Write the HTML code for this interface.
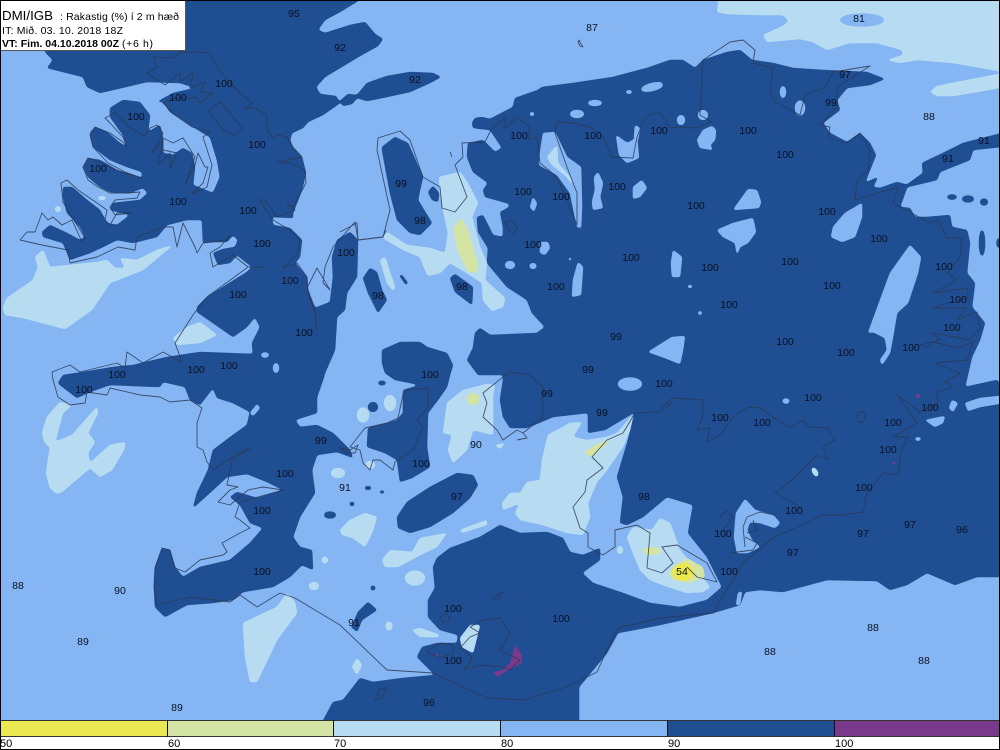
<!DOCTYPE html>
<html lang="is"><head><meta charset="utf-8"><title>DMI/IGB Rakastig</title>
<style>
html,body{margin:0;padding:0;background:#fff}
svg{display:block}
.d{fill:#1f4e93;stroke:#1f4e93;stroke-width:.6;stroke-linejoin:round}
.l{fill:#85b6f3;stroke:#85b6f3;stroke-width:.6;stroke-linejoin:round}
.p{fill:#b7dcf2;stroke:#b7dcf2;stroke-width:.6;stroke-linejoin:round}
.g{fill:#d3e4a4}
.y{fill:#ebe851}
.v{fill:#7a3a8c}
.c{fill:none;stroke:#2d3a55;stroke-width:.9;stroke-linejoin:round;opacity:.85}
.t text{font:10.5px "Liberation Sans",sans-serif;fill:#0a1020;text-anchor:middle}
.k text{font:11px "Liberation Sans",sans-serif;fill:#000}
</style></head><body>
<svg xmlns="http://www.w3.org/2000/svg" width="1000" height="750" viewBox="0 0 1000 750">
<defs>
<filter id="s" filterUnits="userSpaceOnUse" x="-20" y="-20" width="1040" height="790" color-interpolation-filters="sRGB">
<feGaussianBlur stdDeviation="1.3"/>
<feComponentTransfer><feFuncA type="linear" slope="6" intercept="-2.5"/></feComponentTransfer>
</filter>
</defs>
<rect width="1000" height="720" fill="#85b6f3"/>

<!-- top right pale -->
<g class="p" filter="url(#s)">
<polygon points="720,-10 717,12 727,14 757,15 783,15 789,21 783,26 763,35 767,42 800,39 813,42 827,50 850,43 877,43 902,50 903,55 887,60 900,63 917,60 953,63 1010,73 1010,-10"/>
<polygon points="930,92 937,86 967,80 1010,72 1010,86 977,92 953,96 937,96"/>
</g>
<g class="l" filter="url(#s)"><ellipse cx="862" cy="20" rx="22" ry="6.5"/></g>

<!-- west dark -->
<g class="d" filter="url(#s)">
<polygon points="186,-10 362,-10 358,1 340,12 325,20 318,30 325,33 350,25 365,22 370,28 375,34 383,39 378,46 360,56 340,68 325,77 316,87 320,94 336,96 340,103 323,115 308,122 303,128 292,133 290,140 293,148 302,157 306,173 302,190 293,213 293,218 272,217 273,225 290,228 302,240 300,257 295,263 307,277 308,290 315,308 330,302 333,277 332,257 337,240 350,232 358,240 357,277 347,293 345,310 337,317 335,350 325,373 323,380 317,397 317,413 295,420 300,427 317,425 333,433 350,450 353,458 337,452 317,455 312,470 315,493 300,517 293,537 300,547 312,550 313,570 302,565 290,577 273,587 243,592 233,600 213,603 187,605 165,617 155,607 154,587 155,567 162,548 170,550 175,567 183,577 200,567 230,560 250,543 263,528 250,523 240,505 230,497 237,492 247,495 257,498 283,490 267,482 247,474 227,477 213,490 193,508 197,493 208,470 213,450 233,435 247,425 250,412 233,403 217,398 213,388 200,405 190,400 185,387 163,382 160,387 110,385 90,392 77,398 60,385 58,383 63,375 83,372 113,367 133,365 167,357 200,352 227,353 253,354 252,343 260,327 255,317 247,327 233,337 213,323 197,312 197,307 207,297 247,272 252,267 237,255 230,263 218,265 213,253 223,249 235,247 238,240 233,235 227,242 213,242 203,243 202,220 187,220 167,225 157,237 133,243 117,240 103,247 90,253 70,260 63,243 43,237 42,232 50,225 67,233 80,240 85,237 80,227 67,213 63,197 63,187 72,187 87,200 100,210 107,223 117,225 130,215 110,210 113,203 140,200 148,193 143,188 130,193 110,192 100,187 88,177 83,167 88,158 100,160 117,170 142,178 142,172 127,167 110,160 93,147 90,133 95,127 107,132 120,143 127,147 123,135 110,117 110,108 123,100 140,102 150,115 148,132 160,125 163,138 163,153 173,155 183,148 192,153 195,167 193,185 213,193 220,177 217,160 210,137 203,133 187,123 170,112 163,102 157,102 173,93 195,88 180,83 147,82 100,93 87,87 83,77 47,68 53,60 45,52 45,50 186,50"/>
<!-- 92 -->
<polygon points="340,101 348,94 357,95 367,83 387,76 410,72 433,73 441,77 430,83 410,92 387,97 367,101 357,98 352,104 343,106"/>
<!-- east/south -->
<polygon points="472,123 473,128 490,130 502,148 495,152 483,140 468,143 467,157 473,172 488,183 483,190 485,197 510,204 508,208 500,212 503,227 503,237 493,235 483,215 477,217 478,232 488,248 487,263 507,287 527,300 532,313 545,327 537,333 490,335 480,328 475,333 473,348 467,360 478,375 503,375 503,380 500,400 503,417 510,428 527,428 553,417 588,413 588,433 605,430 635,412 628,440 617,477 623,497 620,523 627,525 643,517 667,497 693,505 688,533 707,557 722,587 707,600 680,607 650,603 623,593 593,583 582,573 600,560 600,548 583,555 570,552 563,538 547,532 520,533 500,525 480,537 450,548 437,558 433,567 435,588 428,600 428,617 440,630 458,635 457,643 437,643 422,647 417,657 435,675 403,678 373,682 360,678 343,700 333,702 318,730 579,730 579,687 607,653 618,633 660,625 713,613 740,605 745,592 760,590 783,592 827,580 877,581 890,590 907,585 927,573 955,585 977,577 1010,577 1010,395 997,380 965,387 972,357 980,340 985,323 972,307 975,283 967,273 970,243 967,230 952,227 950,215 927,217 915,217 910,208 900,207 908,185 897,182 880,188 873,187 878,177 865,183 870,170 876,155 870,143 860,133 847,142 830,133 823,123 840,110 837,100 847,88 870,85 885,79 867,72 823,70 793,68 773,63 752,60 740,50 727,52 703,60 695,68 683,60 670,60 647,68 613,77 573,83 542,87 538,90 515,98 513,107 490,119 482,117 475,118"/>
<!-- band 91 -->
<polygon points="905,186 923,173 922,163 943,153 963,143 1010,131 1010,146 973,150 970,160 940,172 937,180 908,187"/>
<!-- 99/98 -->
<polygon points="382,147 395,137 408,143 423,177 420,190 418,200 432,223 420,235 410,233 397,220 390,193 382,150"/>
<polygon points="428,192 433,186 439,193 438,202 432,200"/>
<polygon points="363,278 370,268 377,272 382,290 387,300 378,313 373,303 368,293"/>
<polygon points="399,275 402,275 408,283 406,285"/>
<polygon points="450,278 455,274 473,287 472,305 455,292"/>
<!-- centre 100 -->
<polygon points="382,350 400,342 420,342 427,347 447,353 453,365 450,375 447,387 438,400 428,413 427,447 430,467 412,478 400,482 397,460 385,453 367,447 368,428 387,423 397,420 403,413 403,390 420,385 395,380 385,373 382,363"/>
<polygon points="397,517 407,502 430,487 457,473 473,475 478,485 470,498 453,513 430,527 410,533 398,528"/>
<polygon points="350,630 358,612 368,602 377,610 362,620 357,632 352,627"/>
<ellipse cx="330" cy="515" rx="6" ry="3.5"/>
<ellipse cx="352" cy="504" rx="2.5" ry="2.2"/>
<ellipse cx="368" cy="488" rx="3.5" ry="2"/>
<ellipse cx="382" cy="492" rx="2.5" ry="1.6"/>
<ellipse cx="373" cy="588" rx="2.5" ry="2.5"/>
<ellipse cx="373" cy="407" rx="5" ry="5"/>
<ellipse cx="382" cy="383" rx="4" ry="2.2"/>
<ellipse cx="982" cy="243" rx="3" ry="13"/>
<ellipse cx="999" cy="243" rx="2.5" ry="5"/>
<ellipse cx="952" cy="197" rx="5" ry="2.6"/>
<ellipse cx="968" cy="199" rx="6" ry="3.5"/>
<ellipse cx="984" cy="202" rx="4" ry="3.5"/>
</g>

<!-- light holes -->
<g class="l" filter="url(#s)">
<ellipse cx="652" cy="87" rx="11" ry="4" transform="rotate(-14 652 87)"/>
<ellipse cx="629" cy="92" rx="3.2" ry="1.8"/>
<ellipse cx="595" cy="103" rx="7" ry="3"/>
<ellipse cx="577" cy="114" rx="7" ry="4"/>
<ellipse cx="532" cy="114" rx="2.4" ry="2"/>
<polygon points="543,133 555,132 567,157 581,167 582,207 581,228 577,227 570,193 557,175 539,165 540,153"/>
<polygon points="616,135 627,143 637,138 639,158 627,163 619,155"/>
<polygon points="635,125 640,128 638,140 634,138"/>
<polygon points="598,172 603,183 600,197 603,208 593,210 592,202 595,190 594,177"/>
<polygon points="633,187 642,180 647,188 640,197 633,199"/>
<polygon points="533,197 537,203 534,212 530,207"/>
<polygon points="540,242 548,242 550,248 545,255 540,253"/>
<ellipse cx="510" cy="265" rx="5" ry="4"/>
<ellipse cx="533" cy="266" rx="3.5" ry="3"/>
<ellipse cx="570" cy="259" rx="1.5" ry="1.5"/>
<polygon points="578,262 583,267 581,295 572,297 573,280"/>
<polygon points="673,250 682,257 680,277 672,277 671,263"/>
<polygon points="648,352 672,337 685,336 683,350 680,364 665,358"/>
<ellipse cx="630" cy="384" rx="12" ry="6.5"/>
<ellipse cx="783" cy="92" rx="3" ry="6"/>
<ellipse cx="800" cy="108" rx="5" ry="7.5"/>
<ellipse cx="681" cy="120" rx="4" ry="5"/>
<ellipse cx="703" cy="115" rx="5" ry="5"/>
<ellipse cx="660" cy="85" rx="2.5" ry="3"/>
<polygon points="697,140 703,130 712,126 716,130 715,140 710,145 713,150 700,148"/>
<polygon points="733,210 748,189 757,190 761,202 759,208"/>
<polygon points="717,230 733,223 753,218 756,232 748,243 740,247 737,255 735,243 723,237"/>
<polygon points="833,227 845,213 862,203 862,217 855,237 842,242 831,237"/>
<polygon points="868,333 890,273 910,245 921,257 918,273 908,303 897,313 893,337 890,353 882,365 880,360 887,350 885,338 873,332"/>
<circle cx="700" cy="313" r="2"/>
<rect x="688" y="285" width="4" height="3"/>
<polygon points="952,400 958,403 953,412 949,408"/>
<polygon points="965,403 980,398 1010,395 1010,402 980,407 968,411"/>
<polygon points="925,420 945,416 943,423 935,427"/>
<ellipse cx="918" cy="439" rx="3" ry="1.8"/>
<ellipse cx="786" cy="401" rx="3.5" ry="2.6"/>
<polygon points="734,537 736,513 745,499 755,510 773,515 780,523 775,528 760,523 750,522 747,530 752,540 760,547 748,553 737,553"/>
<polygon points="738,593 742,591 740,605 736,605"/>
<ellipse cx="265" cy="355" rx="4" ry="2.6"/>
<ellipse cx="276" cy="368" rx="3" ry="5"/>
<polygon points="250,413 257,404 260,408 253,416"/>
<ellipse cx="86" cy="283" rx="5" ry="3"/>
<ellipse cx="102" cy="275" rx="5" ry="4"/>
</g>

<!-- pale -->
<g class="p" filter="url(#s)">
<polygon points="3,307 7,298 33,280 38,267 35,257 43,250 50,267 97,262 107,260 115,268 125,268 120,258 137,260 157,250 173,245 143,270 110,283 92,310 65,329 23,318 5,315"/>
<ellipse cx="58" cy="209" rx="3" ry="3"/>
<ellipse cx="102" cy="198" rx="4" ry="2"/>
<polygon points="173,338 187,327 200,322 217,335 200,343 177,345"/>
<polygon points="42,433 47,417 60,402 72,405 63,413 55,442 72,435 88,417 97,407 98,413 88,433 95,442 88,453 90,463 110,445 125,442 125,448 112,470 100,477 90,468 62,492 57,494 50,488 46,473 50,447 45,443"/>
<polygon points="243,623 277,607 287,593 295,602 297,613 277,640 257,682 250,682 245,657"/>
<polygon points="352,667 357,658 362,665 357,675"/>
<ellipse cx="389" cy="626" rx="3.5" ry="4.5"/>
<ellipse cx="314" cy="586" rx="5" ry="4"/>
<ellipse cx="325" cy="560" rx="3" ry="3.5"/>
<polygon points="340,530 350,520 365,513 377,517 372,533 365,547 353,538 342,535"/>
<ellipse cx="338" cy="473" rx="7" ry="5"/>
<polygon points="382,560 390,550 412,552 420,538 447,533 437,547 420,555 398,567 385,567"/>
<ellipse cx="415" cy="578" rx="10" ry="7.5"/>
<polygon points="460,530 473,525 487,520 487,525 477,528 462,533"/>
<polygon points="412,630 420,628 440,635 437,637 420,637"/>
<polygon points="460,638 470,625 480,625 473,653 462,647"/>
<ellipse cx="363" cy="415" rx="6" ry="7.5"/>
<ellipse cx="390" cy="403" rx="6" ry="8"/>
<ellipse cx="370" cy="465" rx="5" ry="4"/>
<polygon points="439,177 460,172 468,183 478,203 472,217 480,247 487,263 485,280 505,298 503,307 492,311 483,300 482,283 470,275 450,263 440,273 428,276 423,265 420,257 403,250 383,238 387,232 407,245 430,248 445,253 448,233 443,210 440,193"/>
<polygon points="380,260 385,257 395,287 393,291 387,283"/>
<polygon points="443,433 447,403 463,390 487,384 495,385 493,395 493,435 473,430 467,450 453,463 448,450 452,435"/>
<polygon points="495,445 505,443 500,449"/>
<polygon points="515,513 520,503 503,510 502,503 510,493 520,493 527,482 540,480 542,460 548,435 570,423 582,422 573,437 587,440 607,437 617,433 633,415 630,430 623,447 607,470 597,482 588,503 590,517 583,535 567,533 543,525 520,520"/>
<ellipse cx="620" cy="550" rx="3" ry="4"/>
<polygon points="627,537 633,527 652,530 660,518 670,523 680,550 710,587 703,592 687,593 668,587 650,580 640,570 633,553"/>
<polygon points="547,157 557,145 558,163 570,177 574,187 567,177 552,165"/>
<ellipse cx="815" cy="472" rx="2.5" ry="5" transform="rotate(-30 815 472)"/>
</g>

<!-- green -->
<g class="g" filter="url(#s)">
<polygon points="453,227 462,218 468,230 478,263 477,273 468,272 457,250"/>
<ellipse cx="473" cy="399" rx="6.5" ry="6"/>
<polygon points="583,453 593,446 613,438 603,447 592,457"/>
<ellipse cx="652" cy="551" rx="10" ry="4"/>
<polygon points="668,573 687,558 703,567 705,577 690,583 673,580"/>
</g>
<ellipse class="y" cx="683" cy="572" rx="11" ry="9"/>

<!-- purple -->
<g class="v">
<polygon points="515,645 522,655 522,663 513,668 505,672 498,677 493,672 503,670 510,663 512,657"/>
<circle cx="437" cy="655" r="1.2"/>
<circle cx="918" cy="396" r="2"/>
<circle cx="894" cy="463" r="1.4"/>
</g>

<!-- coast -->
<g class="c">
<polyline points="20,240 27,232 35,232 42,213 48,220 53,217 62,225 72,220 82,242 85,238 72,217 63,202 61,183 67,180 78,190 97,203 107,210 105,220 110,225 117,213 132,213 115,215 110,207 115,200 137,198 140,192 128,193 110,193 98,187 88,180 83,167 88,158 100,162 115,170 142,178 125,172 108,163 93,147 90,135 95,127 110,133 123,142 127,147 123,137 110,123 105,118 115,113 129,127 117,115 129,127 145,136 150,128 157,125 163,133 152,153 163,140 158,165 170,153 170,168 177,153 163,150 163,138 173,143 183,138 195,157 185,185 195,165 198,153 205,167 208,167 203,183 192,194 207,187 212,165 203,137 210,132 192,127 175,115 163,103 175,98 197,98 200,103 213,93 200,92 205,82 190,88 193,73 180,82 180,73 165,85 147,73 157,67 153,57 173,58 180,52 200,52 210,53 217,67 227,80 240,93 252,103 245,110 253,107 267,115 267,130 273,138 278,135 287,137 293,147 302,157 278,162 290,163 305,170 306,183 293,207 287,203 295,210 277,217 265,200 260,200 273,220 290,230 300,240 298,253 283,268 297,263 307,277 308,293 315,313 317,330 315,310 308,290 307,288 317,268 330,290 323,283 325,267 333,247 355,222 358,240 383,237 386,230"/>
<polyline points="340,232 357,223 358,240 383,237 390,210 377,150 378,138 400,131 410,140 423,177 440,187 442,208 455,212 467,197 455,165 463,157 462,143 485,142 492,128 505,118 505,128 517,117 530,128 528,140 537,137 540,163 557,177 570,207 577,225 577,193 567,167 555,133 557,122 573,123 590,127 603,137 612,157 633,158 637,137 645,117 660,112 670,128 680,127 695,128 712,122 700,115 703,60 730,42 743,40 755,50 753,63 773,68 770,92 775,102 800,115 805,95 825,87 833,72 870,66 837,87 837,107 820,125 830,127 828,138 847,143 860,133 870,150 868,170 857,180 855,200 898,187 893,203 930,223 938,220 947,238 962,238 960,257 947,273 957,280 933,293 967,288 968,297 933,308 967,308 957,320 977,312 980,328 970,340 933,333 940,340 920,345 927,347 933,342 958,348 973,342 967,360 935,363 960,373 945,382 953,387 937,392 938,403 920,412 897,395 917,423 893,437 908,437 902,450 898,475 883,473 867,493 863,512 842,515 822,515"/>
<polyline points="822,515 795,528 773,538 743,563 713,613 660,618 618,628 607,650 597,672 567,687 523,700 487,698 433,673 387,670 340,625 295,598 280,593 257,607 240,595 230,602 190,597 157,605 154,587 155,568 162,548 170,550 175,568 185,572 200,560 223,555 227,552 222,543 240,533 250,528 240,520 235,517 240,502 283,490 263,487 248,490 230,505 218,502 230,490 238,487 227,485 232,460 250,448 235,455 213,470 207,462 203,450 197,447 197,423 202,408 190,400 170,402 160,397 140,395 110,388 107,395 87,392 85,403 70,405 58,397 53,380 52,372 70,365 80,372 117,363 125,368 127,352 143,363 163,352 182,362 175,343 193,315 207,297 248,267 265,267"/>
<polyline points="70,263 97,257 118,247 135,250 137,237 163,227 173,227 177,247 183,223 195,247 197,253 203,243 227,240 230,235 220,247 210,253 213,267 233,255 248,267"/>
<polyline points="20,240 42,245 68,250 70,263"/>
<polygon points="208,110 220,102 230,113 242,128 235,136 223,130"/>
<polygon points="408,390 428,388 428,407 417,420 423,427 413,450 395,462 393,470 380,460 373,460 370,470 363,463 360,450 350,447 365,428 387,423 398,418 403,395"/>
<polygon points="350,450 340,448 346,453 355,453 358,445"/>
<polygon points="483,393 503,377 510,372 530,375 543,387 543,417 523,433 517,430 503,440 497,430 483,417 487,403"/>
<polyline points="523,433 527,438 517,440"/>
<polyline points="635,413 623,433 607,440 592,457 603,468 587,480 585,492 573,507 580,528 588,533 588,547 603,555 615,547 615,530 637,525 650,533 647,568 662,573 673,563 662,547 677,545 707,563 717,582 697,577 687,567"/>
<polyline points="660,408 673,398 703,400 703,415 697,430 710,428 707,442 720,435 733,417 748,407 760,408 777,420 790,428 803,420 808,427 827,428 835,440 823,447 828,460 817,455 807,465 792,480 775,493 793,503 803,510"/>
<polyline points="635,413 660,412 673,402"/>
<polyline points="720,517 727,510 733,517 723,530"/>
<polyline points="745,547 743,527 747,517 760,512 775,515"/>
<polyline points="753,520 757,530 747,533"/>
<polyline points="730,553 753,550 757,543 745,537"/>
<polygon points="470,663 463,670 480,665 503,667 510,670 520,660 500,650 510,633 500,618 483,620 470,627 480,633 470,637 460,648 472,657"/>
<polygon points="428,650 440,643 453,645 453,653 440,658 428,653"/>
<polygon points="497,595 503,592 497,600 493,598"/>
<polygon points="440,617 447,613 450,620 443,623"/>
<polygon points="382,690 380,688 375,700 382,698 387,687"/>
<ellipse cx="861" cy="417" rx="4" ry="5.5"/>
<polygon points="579,40 581,44 583,47 580,46 578,42"/>
<polygon points="505,222 512,220 517,227 514,233 510,232"/>
<polyline points="450,152 452,157"/>
</g>

<!-- labels -->
<g class="t">
<text x="294" y="17">95</text><text x="340" y="51">92</text><text x="592" y="31">87</text><text x="859" y="22">81</text>
<text x="224" y="87">100</text><text x="178" y="101">100</text><text x="415" y="83">92</text><text x="845" y="78">97</text>
<text x="831" y="106">99</text><text x="929" y="120">88</text><text x="136" y="120">100</text><text x="519" y="139">100</text>
<text x="593" y="139">100</text><text x="659" y="134">100</text><text x="748" y="134">100</text><text x="984" y="144">91</text>
<text x="257" y="148">100</text><text x="98" y="172">100</text><text x="785" y="158">100</text><text x="948" y="162">91</text>
<text x="401" y="187">99</text><text x="523" y="195">100</text><text x="617" y="190">100</text><text x="561" y="200">100</text>
<text x="178" y="205">100</text><text x="248" y="214">100</text><text x="420" y="224">98</text><text x="696" y="209">100</text>
<text x="827" y="215">100</text><text x="879" y="242">100</text><text x="262" y="247">100</text><text x="533" y="248">100</text>
<text x="346" y="256">100</text><text x="631" y="261">100</text><text x="710" y="271">100</text><text x="790" y="265">100</text>
<text x="944" y="270">100</text><text x="290" y="284">100</text><text x="832" y="289">100</text><text x="556" y="290">100</text>
<text x="462" y="290">98</text><text x="378" y="299">98</text><text x="238" y="298">100</text><text x="958" y="303">100</text>
<text x="729" y="308">100</text><text x="952" y="331">100</text><text x="304" y="336">100</text><text x="616" y="340">99</text>
<text x="785" y="345">100</text><text x="911" y="351">100</text><text x="846" y="356">100</text><text x="229" y="369">100</text>
<text x="196" y="373">100</text><text x="588" y="373">99</text><text x="117" y="378">100</text><text x="430" y="378">100</text>
<text x="664" y="387">100</text><text x="84" y="393">100</text><text x="547" y="397">99</text><text x="813" y="401">100</text>
<text x="930" y="411">100</text><text x="602" y="416">99</text><text x="720" y="421">100</text><text x="762" y="426">100</text>
<text x="893" y="426">100</text><text x="321" y="444">99</text><text x="476" y="448">90</text><text x="888" y="453">100</text>
<text x="421" y="467">100</text><text x="285" y="477">100</text><text x="864" y="491">100</text><text x="345" y="491">91</text>
<text x="457" y="500">97</text><text x="644" y="500">98</text><text x="262" y="514">100</text><text x="794" y="514">100</text>
<text x="910" y="528">97</text><text x="962" y="533">96</text><text x="723" y="537">100</text><text x="863" y="537">97</text>
<text x="793" y="556">97</text><text x="262" y="575">100</text><text x="682" y="575">54</text><text x="729" y="575">100</text>
<text x="18" y="589">88</text><text x="120" y="594">90</text><text x="453" y="612">100</text><text x="561" y="622">100</text>
<text x="354" y="626">91</text><text x="873" y="631">88</text><text x="83" y="645">89</text><text x="770" y="655">88</text>
<text x="924" y="664">88</text><text x="453" y="664">100</text><text x="429" y="706">96</text><text x="177" y="711">89</text>
</g>

<!-- info box -->
<rect x="0" y="0" width="185.500" height="50.500" fill="#fff" stroke="#555" stroke-width="1"/>
<g fill="#000" font-family="'Liberation Sans',sans-serif">
<text x="2" y="20" font-size="13" textLength="51" lengthAdjust="spacingAndGlyphs">DMI/IGB</text>
<text x="60" y="20" font-size="10.5" textLength="119" lengthAdjust="spacing">: Rakastig (%) í 2 m hæð</text>
<text x="2" y="34" font-size="10.5" textLength="121" lengthAdjust="spacing">IT: Mið. 03. 10. 2018 18Z</text>
<text x="2" y="47" font-size="10.5" font-weight="bold" textLength="117" lengthAdjust="spacing">VT: Fim. 04.10.2018 00Z</text>
<text x="122" y="47" font-size="10.5" textLength="31" lengthAdjust="spacing">(+6 h)</text>
</g>

<!-- legend -->
<rect x="0" y="720" width="1000" height="30" fill="#fff"/>
<rect x="1" y="721" width="166" height="15" fill="#ebe851"/>
<rect x="167" y="721" width="167" height="15" fill="#d3e4a4"/>
<rect x="334" y="721" width="167" height="15" fill="#b7dcf2"/>
<rect x="501" y="721" width="166" height="15" fill="#85b6f3"/>
<rect x="667" y="721" width="167" height="15" fill="#1f4e93"/>
<rect x="834" y="721" width="165" height="15" fill="#7a3a8c"/>
<path d="M0 720.500H1000M0 736.500H1000" stroke="#333" stroke-width="1" fill="none"/>
<path d="M167.500 720V737M333.500 720V737M500.500 720V737M667.500 720V737M834.500 720V737" stroke="#111" stroke-width="1" fill="none"/>
<g class="k">
<text x="0" y="747">50</text><text x="168" y="747">60</text><text x="334" y="747">70</text>
<text x="501" y="747">80</text><text x="668" y="747">90</text><text x="835" y="747">100</text>
</g>

<!-- frame -->
<rect x="0.500" y="0.500" width="999" height="749" fill="none" stroke="#000" stroke-width="1"/>
</svg>
</body></html>
